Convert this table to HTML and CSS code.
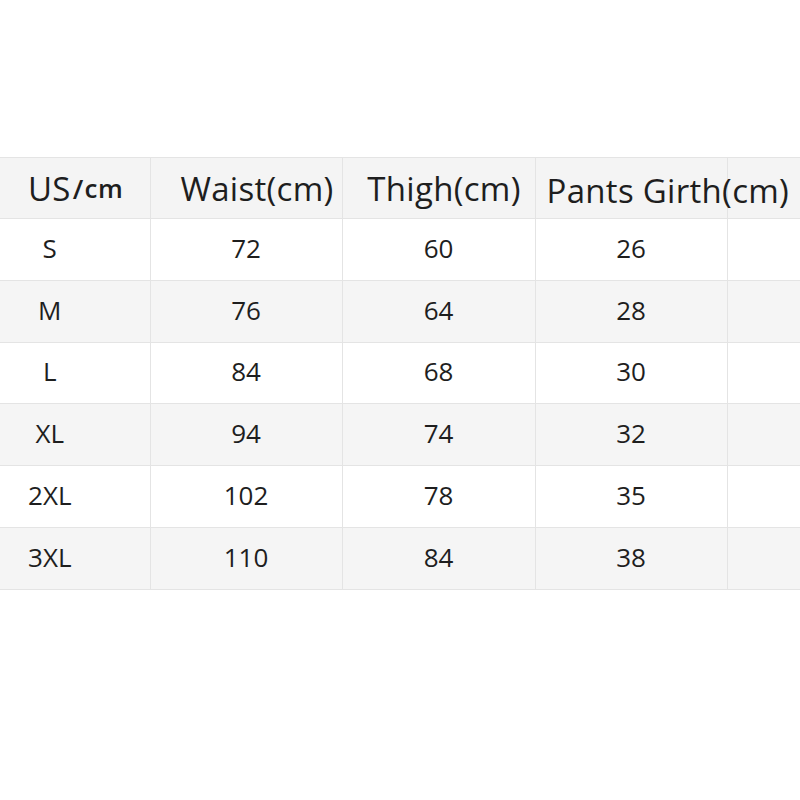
FILE: index.html
```html
<!DOCTYPE html>
<html>
<head>
<meta charset="utf-8">
<link rel="stylesheet" href="styles.css">
</head>
<body>
<div class="page">
  <table class="size-table">
    <colgroup>
      <col class="c1"><col class="c2"><col class="c3"><col class="c4"><col class="c5">
    </colgroup>
    <thead>
      <tr class="head">
        <th class="h-size">US<span class="slash">/</span><span class="small">cm</span></th>
        <th class="h-waist">Waist(cm)</th>
        <th class="h-thigh">Thigh(cm)</th>
        <th class="h-girth">Pants Girth(cm)</th>
        <th class="h-empty"></th>
      </tr>
    </thead>
    <tbody>
      <tr class="odd"><td class="size">S</td><td>72</td><td>60</td><td>26</td><td></td></tr>
      <tr class="even"><td class="size">M</td><td>76</td><td>64</td><td>28</td><td></td></tr>
      <tr class="odd"><td class="size">L</td><td>84</td><td>68</td><td>30</td><td></td></tr>
      <tr class="even"><td class="size">XL</td><td>94</td><td>74</td><td>32</td><td></td></tr>
      <tr class="odd"><td class="size">2XL</td><td>102</td><td>78</td><td>35</td><td></td></tr>
      <tr class="even"><td class="size">3XL</td><td>110</td><td>84</td><td>38</td><td></td></tr>
    </tbody>
  </table>
</div>
</body>
</html>
```

FILE: styles.css
```css
html, body {
  margin: 0;
  padding: 0;
  background: #ffffff;
}

.page {
  width: 800px;
  height: 800px;
  padding-top: 157px;
  box-sizing: border-box;
  font-family: "Open Sans", "Noto Sans", "Liberation Sans", sans-serif;
  color: #1e1e1e;
}

.size-table {
  width: 800px;
  border-collapse: collapse;
  table-layout: fixed;
}

.c1 { width: 150px; }
.c2 { width: 192px; }
.c3 { width: 193px; }
.c4 { width: 192px; }
.c5 { width: 73px; }

.size-table th,
.size-table td {
  border: 1px solid #e4e4e4;
  padding: 0;
  text-align: center;
  vertical-align: middle;
  white-space: nowrap;
  overflow: visible;
}

.size-table tr > :first-child { border-left: none; }
.size-table tr > :last-child { border-right: none; }

.head {
  height: 61px;
  background: #f4f4f4;
}

.head th {
  font-weight: 400;
  font-size: 33px;
  letter-spacing: 0.3px;
  padding-top: 1px;
}

.h-size {
  text-align: left !important;
  padding-left: 28px !important;
}

.h-size .slash {
  font-size: 27px;
  font-weight: 600;
  margin: 0 1px 0 2px;
  position: relative;
  top: -2px;
}

.h-size .small {
  font-size: 26px;
  font-weight: 600;
  letter-spacing: 0.5px;
  position: relative;
  top: -3px;
}

.h-waist { padding-left: 22px !important; }
.h-thigh { padding-left: 11px !important; }

.h-girth {
  text-align: left !important;
  padding-left: 11px !important;
  padding-top: 5px !important;
  position: relative;
  z-index: 1;
}

tbody tr {
  height: 61.8px;
}

tbody td {
  font-size: 26px;
  padding-bottom: 3px !important;
}

tr.odd { background: #ffffff; }
tr.even { background: #f5f5f5; }

td.size {
  padding-right: 50px !important;
}
```
